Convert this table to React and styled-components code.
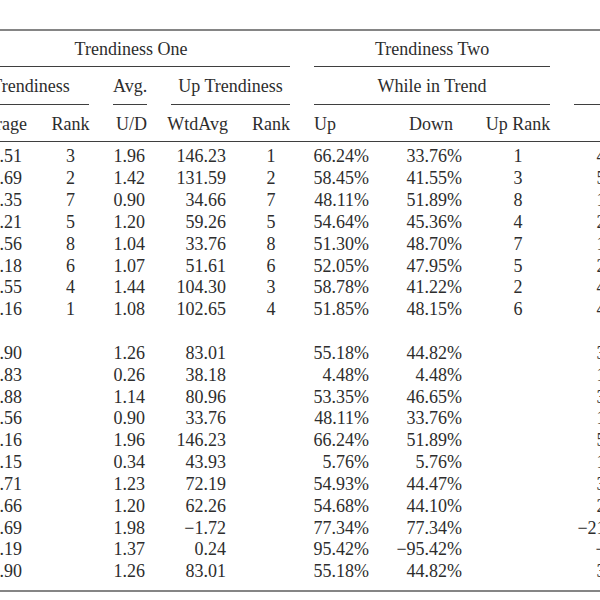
import React from 'react';
import styled, { createGlobalStyle } from 'styled-components';

const GlobalStyle = createGlobalStyle`
  html, body {
    margin: 0;
    padding: 0;
    background: #ffffff;
    overflow: hidden;
  }
  body {
    font-family: "Liberation Serif", "Times New Roman", serif;
    color: #2d2d2d;
  }
`;

// column layout: the table starts 40px left of the page, the last column runs off the right
const columns = [
  { w: 80, align: 'right', pr: 18 },
  { w: 61, align: 'center' },
  { w: 58, align: 'right', pr: 14 },
  { w: 81, align: 'right', pr: 14 },
  { w: 62, align: 'center' },
  { w: 79, align: 'right', pr: 12 },
  { w: 93, align: 'right', pr: 12 },
  { w: 88, align: 'center' },
  { w: 80, align: 'right', pr: 14 },
];

const subHeads = [
  { label: 'Average', align: 'right', pr: 13 },
  { label: 'Rank', align: 'center' },
  { label: 'U/D', align: 'right', pr: 12 },
  { label: 'WtdAvg', align: 'right', pr: 12 },
  { label: 'Rank', align: 'center' },
  { label: 'Up', align: 'left', pl: 12 },
  { label: 'Down', align: 'left', pl: 28 },
  { label: 'Up Rank', align: 'center' },
  { label: '\u00a0', align: 'right', pr: 14 },
];

const topRows = [
  ['1.51', '3', '1.96', '146.23', '1', '66.24%', '33.76%', '1', '4.35'],
  ['1.69', '2', '1.42', '131.59', '2', '58.45%', '41.55%', '3', '5.12'],
  ['1.35', '7', '0.90', '34.66', '7', '48.11%', '51.89%', '8', '1.84'],
  ['1.21', '5', '1.20', '59.26', '5', '54.64%', '45.36%', '4', '2.47'],
  ['1.56', '8', '1.04', '33.76', '8', '51.30%', '48.70%', '7', '1.93'],
  ['1.18', '6', '1.07', '51.61', '6', '52.05%', '47.95%', '5', '2.66'],
  ['1.55', '4', '1.44', '104.30', '3', '58.78%', '41.22%', '2', '4.08'],
  ['1.16', '1', '1.08', '102.65', '4', '51.85%', '48.15%', '6', '4.71'],
];

const bottomRows = [
  ['1.90', '', '1.26', '83.01', '', '55.18%', '44.82%', '', '3.27'],
  ['0.83', '', '0.26', '38.18', '', '4.48%', '4.48%', '', '1.05'],
  ['1.88', '', '1.14', '80.96', '', '53.35%', '46.65%', '', '3.42'],
  ['1.56', '', '0.90', '33.76', '', '48.11%', '33.76%', '', '1.93'],
  ['2.16', '', '1.96', '146.23', '', '66.24%', '51.89%', '', '5.12'],
  ['0.15', '', '0.34', '43.93', '', '5.76%', '5.76%', '', '1.05'],
  ['1.71', '', '1.23', '72.19', '', '54.93%', '44.47%', '', '3.18'],
  ['1.66', '', '1.20', '62.26', '', '54.68%', '44.10%', '', '2.95'],
  ['2.69', '', '1.98', '\u22121.72', '', '77.34%', '77.34%', '', '\u221221.43'],
  ['3.19', '', '1.37', '0.24', '', '95.42%', '\u221295.42%', '', '\u22120.2'],
  ['1.90', '', '1.26', '83.01', '', '55.18%', '44.82%', '', '3.27'],
];

const App = () => {
  const renderRow = (row, i) => (
    <tr key={i}>
      {row.map((value, c) => (
        <Cell key={c} $align={columns[c].align} $pr={columns[c].pr}>
          {value}
        </Cell>
      ))}
    </tr>
  );

  return (
    <React.Fragment>
      <GlobalStyle />
      <Page>
        <Table>
          <colgroup>
            {columns.map((col, i) => (
              <Col key={i} $w={col.w} />
            ))}
          </colgroup>
          <thead>
            <tr>
              <GroupHead colSpan={5} $pt={8}>
                <GroupLabel $pb={7}>Trendiness One</GroupLabel>
              </GroupHead>
              <GroupHead colSpan={3} $pt={8}>
                <GroupLabel $pb={7}>Trendiness Two</GroupLabel>
              </GroupHead>
              <GroupHead $pt={8} />
            </tr>
            <tr>
              <GroupHead colSpan={2} $pt={8.5}>
                <GroupLabel $pb={8.5}>Trendiness</GroupLabel>
              </GroupHead>
              <GroupHead $pt={8.5}>
                <GroupLabel $pb={8.5}>Avg.</GroupLabel>
              </GroupHead>
              <GroupHead colSpan={2} $pt={8.5}>
                <GroupLabel $pb={8.5}>Up Trendiness</GroupLabel>
              </GroupHead>
              <GroupHead colSpan={3} $pt={8.5}>
                <GroupLabel $pb={8.5}>While in Trend</GroupLabel>
              </GroupHead>
              <GroupHead $pt={8.5}>
                <GroupLabel $pb={8.5}>{'\u00a0'}</GroupLabel>
              </GroupHead>
            </tr>
            <tr>
              {subHeads.map((h, i) => (
                <SubHead key={i} $align={h.align} $pl={h.pl} $pr={h.pr}>
                  {h.label}
                </SubHead>
              ))}
            </tr>
          </thead>
          <tbody>
            <Spacer $h={4.3}>
              <td colSpan={9} />
            </Spacer>
            {topRows.map(renderRow)}
            <Spacer $h={21.85}>
              <td colSpan={9} />
            </Spacer>
            {bottomRows.map(renderRow)}
            <Spacer $h={7}>
              <td colSpan={9} />
            </Spacer>
          </tbody>
        </Table>
      </Page>
    </React.Fragment>
  );
};

export default App;

const Page = styled.div`
  width: 600px;
  height: 600px;
  overflow: hidden;
  padding-top: 29px;
  box-sizing: border-box;
`;

const Table = styled.table`
  margin-left: -40px;
  width: 682px;
  table-layout: fixed;
  border-collapse: separate;
  border-spacing: 0;
  border-top: 2px solid #858585;
  border-bottom: 2px solid #858585;
  font-size: 18px;
`;

const Col = styled.col`
  width: ${({ $w }) => $w}px;
`;

const GroupHead = styled.th`
  padding: ${({ $pt }) => $pt}px 0 0 0;
  font-weight: normal;
  vertical-align: bottom;
`;

const GroupLabel = styled.div`
  margin: 0 12px;
  padding-bottom: ${({ $pb }) => $pb}px;
  border-bottom: 1px solid #3f3f3f;
  line-height: 20px;
  text-align: center;
  white-space: nowrap;
`;

const SubHead = styled.th`
  padding: 9px ${({ $pr }) => $pr || 0}px 7px ${({ $pl }) => $pl || 0}px;
  font-weight: normal;
  line-height: 20px;
  text-align: ${({ $align }) => $align};
  white-space: nowrap;
  border-bottom: 1px solid #3f3f3f;
`;

const Cell = styled.td`
  padding: 0 ${({ $pr }) => $pr || 0}px 0 0;
  line-height: 21.85px;
  height: 21.85px;
  text-align: ${({ $align }) => $align};
  white-space: nowrap;
`;

const Spacer = styled.tr`
  height: ${({ $h }) => $h}px;

  & > td {
    padding: 0;
    height: ${({ $h }) => $h}px;
  }
`;
